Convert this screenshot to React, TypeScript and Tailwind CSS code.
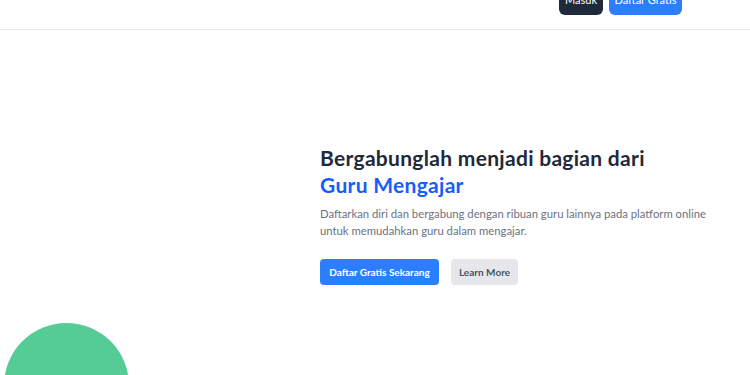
import React from 'react';

const font = { fontFamily: 'Lato, "Noto Sans", sans-serif' };

const Header = () => {
  return (
    <header className="h-[30px] border-b border-gray-200 bg-white">
      <div className="flex justify-end gap-[6px] pr-[68px] -translate-y-[14px]">
        <button className="h-[29px] w-[44px] rounded-md bg-gray-800 text-white text-[11px]">Masuk</button>
        <button className="h-[29px] w-[73px] rounded-md bg-blue-500 text-white text-[11px]">Daftar Gratis</button>
      </div>
    </header>
  );
};

const Hero = () => {
  return (
    <section className="grid grid-cols-[320px_1fr] pt-[114px]">
      <div />
      <div className="pr-[20px]">
        <h1 className="text-[21px] leading-[27px] font-bold text-gray-800 tracking-[0.3px]">
          Bergabunglah menjadi bagian dari
          <br />
          <span className="text-blue-600">Guru Mengajar</span>
        </h1>
        <p className="mt-[7px] text-[11.3px] leading-[17px] text-gray-500">
          Daftarkan diri dan bergabung dengan ribuan guru lainnya pada platform online untuk memudahkan guru dalam mengajar.
        </p>
        <div className="mt-[20px] flex gap-[12px]">
          <button className="h-[26px] w-[119px] rounded bg-blue-500 text-white text-[10px] font-bold">Daftar Gratis Sekarang</button>
          <button className="h-[26px] w-[67px] rounded bg-gray-200 text-gray-600 text-[10px] font-bold">Learn More</button>
        </div>
      </div>
    </section>
  );
};

export default function App() {
  return (
    <div className="relative w-[750px] h-[375px] overflow-hidden bg-white" style={font}>
      <Header />
      <Hero />
      <div className="absolute left-[4px] top-[323px] w-[125px] h-[125px] rounded-full bg-[#55cb95]" />
    </div>
  );
}
